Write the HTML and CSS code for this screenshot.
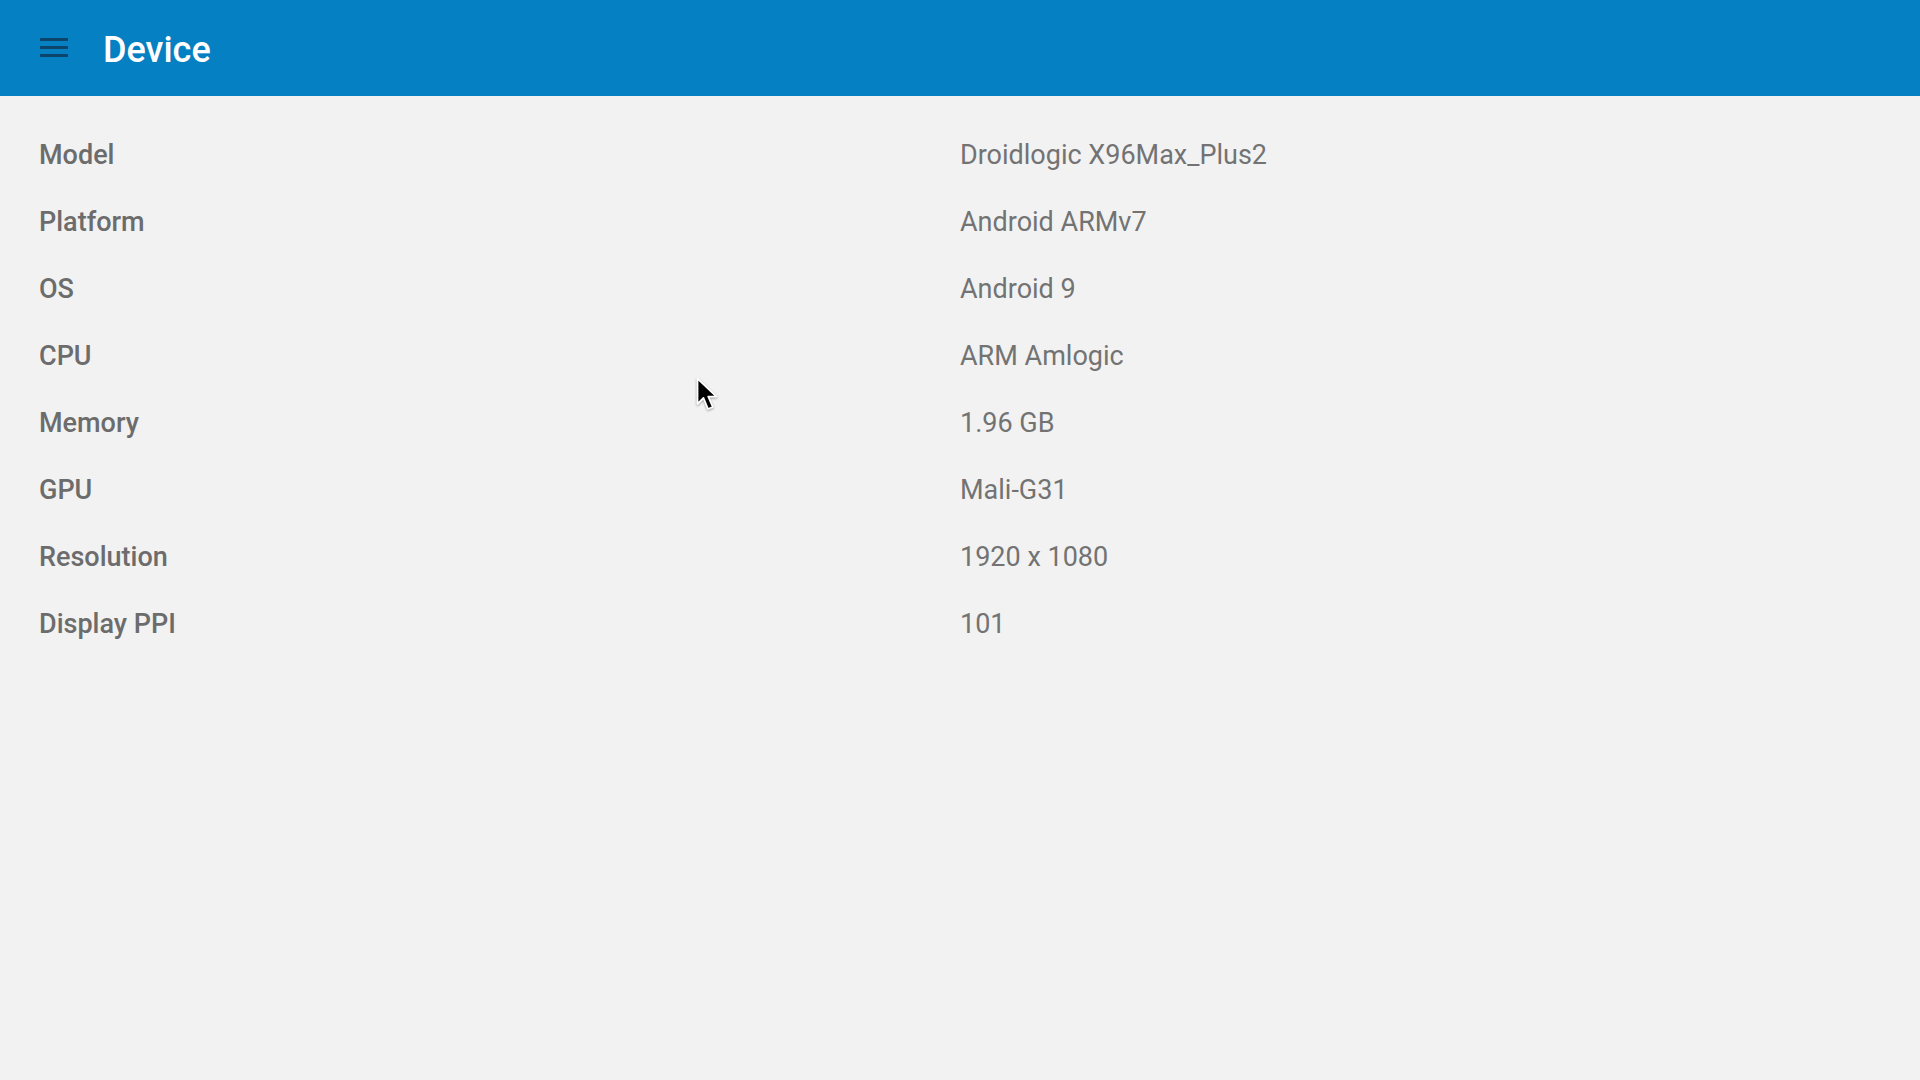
FILE: index.html
```html
<!DOCTYPE html>
<html lang="en">
<head>
    <meta charset="UTF-8">
    <meta name="viewport" content="width=device-width, initial-scale=1.0">
    <title>Device</title>
    <link rel="stylesheet" href="styles.css">
</head>
<body>
<header class="app-bar">
    <button class="menu-button" aria-label="Menu">
        <svg width="28" height="19" viewBox="0 0 28 19">
            <rect x="0" y="0" width="28" height="3"/>
            <rect x="0" y="8" width="28" height="3"/>
            <rect x="0" y="16" width="28" height="3"/>
        </svg>
    </button>
    <h1>Device</h1>
</header>
<main class="info-list">
    <div class="info-row"><span class="info-label">Model</span><span class="info-value">Droidlogic X96Max_Plus2</span></div>
    <div class="info-row"><span class="info-label">Platform</span><span class="info-value">Android ARMv7</span></div>
    <div class="info-row"><span class="info-label">OS</span><span class="info-value">Android 9</span></div>
    <div class="info-row"><span class="info-label">CPU</span><span class="info-value">ARM Amlogic</span></div>
    <div class="info-row"><span class="info-label">Memory</span><span class="info-value">1.96 GB</span></div>
    <div class="info-row"><span class="info-label">GPU</span><span class="info-value">Mali-G31</span></div>
    <div class="info-row"><span class="info-label">Resolution</span><span class="info-value">1920 x 1080</span></div>
    <div class="info-row"><span class="info-label">Display PPI</span><span class="info-value">101</span></div>
</main>
<!-- mouse pointer -->
<svg class="pointer" width="26" height="37" viewBox="0 0 26 37">
    <path d="M1.5 1.5 L1.5 27 L7.5 21 L12 32 L16.8 30 L12.3 19.6 L20.5 19.6 Z" fill="#000" stroke="#fff" stroke-width="1.8" stroke-linejoin="round"/>
</svg>
</body>
</html>
```

FILE: styles.css
```css
body {
    font-family: Roboto, "Liberation Sans", sans-serif;
    margin: 0;
    padding: 0;
    background-color: #f2f2f2;
    width: 1920px;
    height: 1080px;
    overflow: hidden;
    position: relative;
}

.app-bar {
    background-color: #0580c2;
    height: 96px;
    display: flex;
    align-items: center;
    padding: 0 40px;
    box-sizing: border-box;
}

.menu-button {
    background: none;
    border: 0;
    padding: 0;
    margin: 0 35px 0 0;
    display: flex;
    fill: #0b456b;
    position: relative;
    top: -1px;
}

.app-bar h1 {
    margin: 0;
    color: #fff;
    font-size: 36px;
    font-weight: 500;
    line-height: 1;
    position: relative;
    top: 2px;
}

.info-list {
    padding-top: 26px;
}

.info-row {
    display: grid;
    grid-template-columns: 50% 50%;
    height: 67px;
    line-height: 67px;
    font-size: 27px;
}

.info-label {
    padding-left: 39px;
    font-weight: 500;
    color: #6c6c6c;
}

.info-value {
    color: #737373;
}

.pointer {
    position: absolute;
    left: 695.5px;
    top: 376.5px;
    filter: drop-shadow(0 1px 1px rgba(0, 0, 0, 0.35));
}
```
